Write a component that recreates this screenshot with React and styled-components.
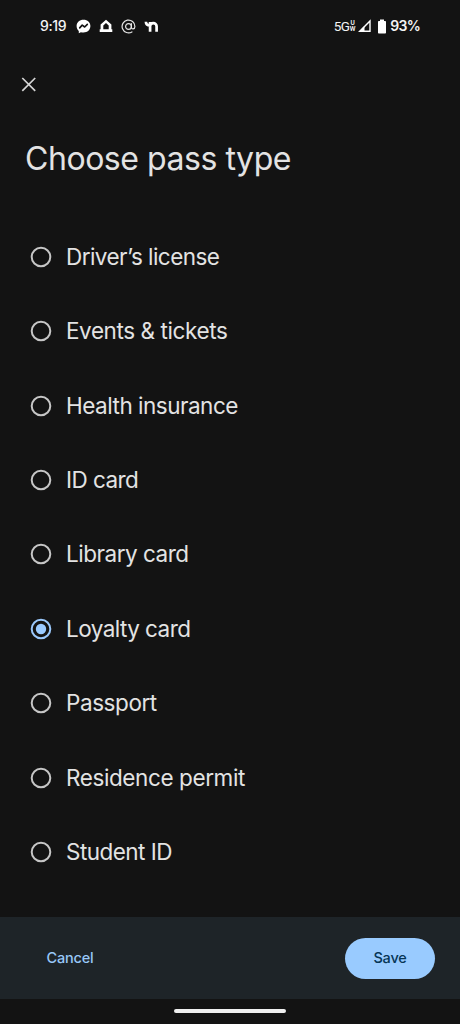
// Import dependencies
import React, { useState } from 'react';
import styled, { createGlobalStyle } from 'styled-components';

const GlobalStyle = createGlobalStyle`
    * {
        box-sizing: border-box;
    }

    body {
        margin: 0;
        background: #131313;
        font-family: Inter, Roboto, sans-serif;
    }
`

const Screen = styled.div`
    width: 460px;
    height: 1024px;
    display: flex;
    flex-direction: column;
    background: #131313;
    color: #e3e3e3;
    overflow: hidden;
`

// - - - - - Status bar - - - - -
const StatusBar = styled.div`
    height: 52px;
    flex: none;
    padding: 0 40px;
    display: flex;
    align-items: center;
    justify-content: space-between;
    color: #f4f4f4;
`

const StatusGroup = styled.div`
    display: flex;
    align-items: center;

    svg {
        display: block;
        flex: none;
    }
`

const Clock = styled.span`
    width: 36px;
    font-size: 14px;
    line-height: 16px;
    font-weight: 500;
    letter-spacing: -0.4px;
`

const AppIcons = styled.div`
    display: flex;
    align-items: center;
    gap: 8px;
`

const Network = styled.span`
    font-family: Roboto, sans-serif;
    font-size: 13.5px;
    line-height: 16px;
    letter-spacing: -0.7px;
`

const Band = styled.span`
    width: 5px;
    margin: 0 3px 0 1px;
    display: flex;
    flex-direction: column;
    align-items: center;
    font-family: Roboto, sans-serif;
    font-size: 6.5px;
    line-height: 6px;
    font-weight: 600;
`

const Battery = styled.span`
    margin-left: 4px;
    font-size: 14px;
    line-height: 16px;
    font-weight: 600;
    letter-spacing: -0.7px;
`

// - - - - - Page - - - - -
const Header = styled.header`
    height: 167.8px;
    flex: none;
    padding: 25px 21px 0;
`

const CloseButton = styled.button`
    display: block;
    width: 16px;
    height: 16px;
    padding: 0;
    border: 0;
    background: none;
    color: #d5d5d5;

    svg {
        display: block;
    }
`

const Title = styled.h1`
    margin: 46px 0 0 4px;
    font-size: 32px;
    line-height: 40px;
    font-weight: 400;
    letter-spacing: -0.45px;
    white-space: nowrap;
`

const OptionList = styled.div`
    flex: none;
    height: 697.5px;
    display: grid;
    grid-template-rows: repeat(9, 74.375px);
`

const Option = styled.label`
    display: flex;
    align-items: center;
    gap: 14px;
    padding-left: 30px;
`

const Radio = styled.span`
    display: grid;
    flex: none;
    width: 22px;
    height: 22px;

    input, svg {
        grid-area: 1 / 1;
        width: 22px;
        height: 22px;
        margin: 0;
    }

    input {
        opacity: 0;
    }
`

const OptionText = styled.span`
    font-size: 22.5px;
    line-height: 28px;
    letter-spacing: ${props => props.$spacing}px;
    white-space: nowrap;
`

// - - - - - Bottom - - - - -
const ActionBar = styled.footer`
    height: 82px;
    flex: none;
    padding: 0 25px 0 26px;
    display: flex;
    align-items: center;
    justify-content: space-between;
    background: #1e2428;
`

const Button = styled.button`
    height: 41px;
    width: ${props => props.$primary ? '90px' : '88px'};
    padding: 0 0 2px;
    border: 0;
    border-radius: 21px;
    background: ${props => props.$primary ? '#99cbff' : 'none'};
    color: ${props => props.$primary ? '#063657' : '#98c8f8'};
    font-family: inherit;
    font-size: 14.5px;
    font-weight: 500;
    letter-spacing: -0.2px;
`

const NavArea = styled.div`
    flex: 1;
    display: flex;
    justify-content: center;
    padding-top: 10px;
`

const NavHandle = styled.div`
    width: 112px;
    height: 4px;
    border-radius: 2px;
    background: #f0f0f0;
`

const passTypes = [
    {name: 'Driver’s license', spacing: -0.55},
    {name: 'Events & tickets', spacing: -0.41},
    {name: 'Health insurance', spacing: -0.49},
    {name: 'ID card', spacing: -0.55},
    {name: 'Library card', spacing: -0.48},
    {name: 'Loyalty card', spacing: -0.55},
    {name: 'Passport', spacing: -0.43},
    {name: 'Residence permit', spacing: -0.4},
    {name: 'Student ID', spacing: -0.53}
]

const RadioIcon = ({checked}) => (
    <svg viewBox="0 0 22 22">
        <circle cx="11" cy="11" r="9.3" fill="none" stroke={checked ? '#9bc8fb' : '#c6c6c6'} strokeWidth="2" />
        {checked && <circle cx="11" cy="11" r="5.2" fill="#9bcbff" />}
    </svg>
)

const MessengerIcon = () => (
    <svg width="15" height="15" viewBox="0 0 15 15">
        <path fill="#fff" d="M7.5.8C3.5.8.6 3.5.6 7.1c0 2 .8 3.7 2.2 4.9v2.2l2.1-1c.8.3 1.7.4 2.6.4 4 0 6.9-2.8 6.9-6.5S11.5.8 7.5.8z" />
        <path fill="none" stroke="#131313" strokeWidth="1.6" strokeLinejoin="round" strokeLinecap="round" d="M3.7 8.9 6.2 6.1 8.7 8 11.3 5.4" />
    </svg>
)

const HomeIcon = () => (
    <svg width="14" height="15" viewBox="0 0 14 15">
        <path
            fill="#fff"
            fillRule="evenodd"
            d="M7 .8 12.4 5.400V10.200H13.300V13H.7V10.200H1.600V5.400zM7 4 4.300 6.600V10.200H9.700V6.600z"
        />
    </svg>
)

const ThreadsIcon = () => (
    <svg width="15" height="15" viewBox="0 0 15 15" fill="none" stroke="#e6e6e6" strokeWidth="1.2" strokeLinecap="round">
        <circle cx="7.5" cy="7.5" r="2.9" />
        <path d="M10.4 4.7v3.600c0 2.400 3.500 2.200 3.500-.8a6.400 6.400 0 1 0-3 5.400" />
    </svg>
)

const NextdoorIcon = () => (
    <svg width="15" height="15" viewBox="0 0 15 15" fill="none" stroke="#fff" strokeWidth="2.7">
        <path d="M1.900 2.800c0 2.300 1.200 3.600 4.200 3.600M6.100 12.700V7.300c0-4.200 6.500-4.200 6.500 0v5.400M6.100 3v5" />
    </svg>
)

// App Component
const App = () => {
    const [selected, setSelected] = useState('Loyalty card');

    return (
        <Screen>
            <GlobalStyle />
            <StatusBar>
                <StatusGroup>
                    <Clock>9:19</Clock>
                    <AppIcons>
                        <MessengerIcon />
                        <HomeIcon />
                        <ThreadsIcon />
                        <NextdoorIcon />
                    </AppIcons>
                </StatusGroup>
                <StatusGroup>
                    <Network>5G</Network>
                    <Band><span>U</span><span>W</span></Band>
                    <svg width="13" height="14" viewBox="0 0 13 14">
                        <path fill="none" stroke="#fff" strokeWidth="1.4" d="M1.8 12.3 12 1.9v10.4z" />
                        <path fill="#fff" d="M.5 13 6.5 6.8V13z" />
                    </svg>
                    <svg width="15" height="15" viewBox="0 0 15 15">
                        <path fill="#fff" d="M9 .5h4V2h1.2q.8 0 .8.8v11q0 .8-.8.8H7.8q-.8 0-.8-.8v-11q0-.8.8-.8H9z" />
                    </svg>
                    <Battery>93%</Battery>
                </StatusGroup>
            </StatusBar>

            <Header>
                <CloseButton aria-label="Close">
                    <svg width="16" height="16" viewBox="0 0 16 16" stroke="currentColor" strokeWidth="1.7">
                        <path d="M1.3 1 14.2 13.9M14.2 1 1.3 13.9" />
                    </svg>
                </CloseButton>
                <Title>Choose pass type</Title>
            </Header>

            <OptionList>
                {passTypes.map(type => (
                    <Option key={type.name}>
                        <Radio>
                            <RadioIcon checked={selected === type.name} />
                            <input
                                type="radio"
                                name="passType"
                                checked={selected === type.name}
                                onChange={() => setSelected(type.name)}
                            />
                        </Radio>
                        <OptionText $spacing={type.spacing}>{type.name}</OptionText>
                    </Option>
                ))}
            </OptionList>

            <ActionBar>
                <Button type="button">Cancel</Button>
                <Button type="button" $primary>Save</Button>
            </ActionBar>
            <NavArea>
                <NavHandle />
            </NavArea>
        </Screen>
    )
}

export default App;
